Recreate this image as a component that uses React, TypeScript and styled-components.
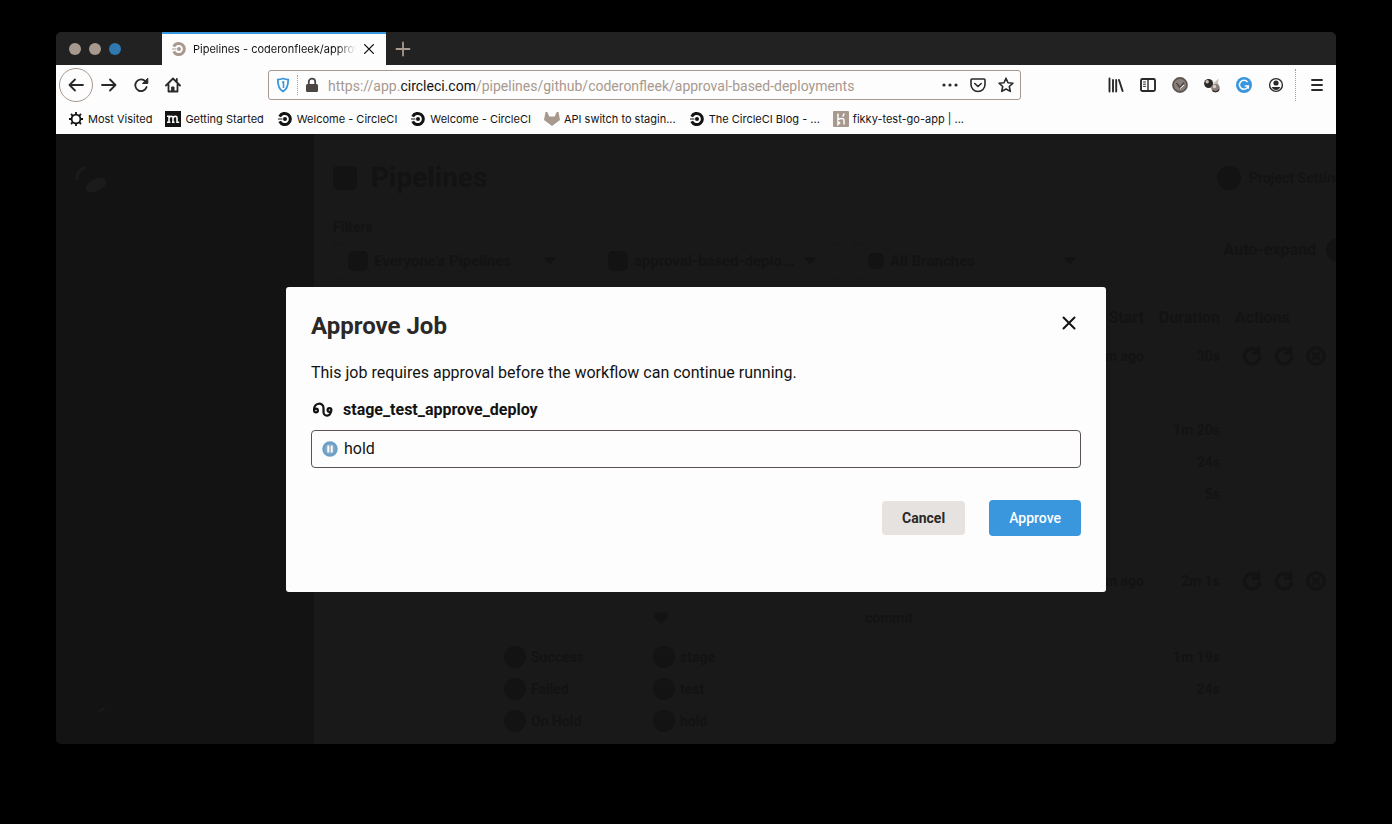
import React from 'react';
import styled, { createGlobalStyle } from 'styled-components';

const ink = '#2b2828';
const taupe = '#a8998f';
const blue = '#3a96dd';
const shade = '#131313';

const Global = createGlobalStyle`
  * { box-sizing: border-box; }
  body { margin: 0; background: #000; font-family: Roboto, "Liberation Sans", sans-serif; }
  button, select { font: inherit; color: inherit; background: none; border: 0; padding: 0; margin: 0; }
  svg { display: block; flex: none; }
`;

const Desktop = styled.div`
  min-height: 100vh;
  display: flex;
  flex-direction: column;
  padding: 32px 56px 80px;
`;

const Window = styled.div`
  flex: 1;
  display: flex;
  flex-direction: column;
  border-radius: 5px;
  overflow: hidden;
`;

const TabBar = styled.div`
  display: flex;
  height: 33px;
  background: #222222;
  color: ${taupe};
`;

const Lights = styled.div`
  display: flex;
  align-items: center;
  gap: 8px;
  width: 106px;
  padding-left: 13px;
`;

const Light = styled.span<{ $color: string }>`
  width: 12px;
  height: 12px;
  border-radius: 50%;
  background: ${(p) => p.$color};
`;

const Tab = styled.div`
  display: flex;
  align-items: center;
  gap: 6px;
  width: 224px;
  padding: 0 10px 2px 9px;
  background: #fdfdfd;
  border-top: 2px solid ${blue};
  color: ${shade};
  font: 11px/16px Inter, sans-serif;
`;

const TabTitle = styled.span`
  flex: 1;
  overflow: hidden;
  white-space: nowrap;
  mask-image: linear-gradient(to right, #000 88%, transparent);
`;

const PlainButton = styled.button`
  display: flex;
  align-items: center;
  justify-content: center;
`;

const NewTab = styled(PlainButton)`
  width: 34px;
`;

const Chrome = styled.div`
  background: #fdfdfd;
  color: ${ink};
  height: 69px;
`;

const Toolbar = styled.div`
  display: flex;
  align-items: center;
  height: 40px;
  padding: 0 3px;
`;

const ToolButton = styled(PlainButton)`
  width: 32px;
  height: 32px;
`;

const BackButton = styled(PlainButton)`
  width: 34px;
  height: 34px;
  border: 1px solid ${taupe};
  border-radius: 50%;
`;

const AddressBar = styled.div`
  flex: 1;
  min-width: 0;
  display: flex;
  align-items: center;
  height: 30px;
  margin: 0 79px;
  padding: 0 6px;
  border: 1px solid ${taupe};
  border-radius: 3px;
`;

const Divider = styled.span<{ $height: number }>`
  height: ${(p) => p.$height}px;
  margin: 0 6px;
  border-left: 1px dotted ${taupe};
`;

const BarEnd = styled(Divider)`
  margin: 0 5px 0 3px;
`;

const Address = styled.div`
  flex: 1;
  min-width: 0;
  overflow: hidden;
  white-space: nowrap;
  margin-left: 8px;
  padding-top: 2px;
  color: ${taupe};
  font: 14px/20px Roboto, sans-serif;
  b { font-weight: 400; color: ${shade}; }
`;

const AddressActions = styled.div`
  display: flex;
  gap: 12px;
`;

const Bookmarks = styled.nav`
  display: flex;
  align-items: center;
  gap: 13px;
  height: 28px;
  padding-left: 12px;
`;

const Bookmark = styled.a`
  display: flex;
  align-items: center;
  gap: 4px;
  color: ${shade};
  text-decoration: none;
  white-space: nowrap;
  font: 11px/16px Inter, sans-serif;
`;

const Viewport = styled.div`
  flex: 1;
  position: relative;
  display: flex;
  background: ${shade};
`;

const Sidebar = styled.aside`
  width: 258px;
  flex: none;
  display: flex;
  flex-direction: column;
  justify-content: space-between;
  padding: 26px 18px;
`;

const Main = styled.main`
  flex: 1;
  min-width: 0;
  overflow: hidden;
  padding: 24px 0 7px 19px;
  background: #191919;
  color: ${shade};
  font-size: 14px;
  line-height: 18px;
`;

const Wide = styled.div`
  width: calc(100% + 14px);
`;

const Spread = styled.div<{ $top?: boolean }>`
  display: flex;
  justify-content: space-between;
  align-items: ${(p) => (p.$top ? 'flex-start' : 'center')};
`;

const Cluster = styled.div<{ $gap: number }>`
  display: flex;
  align-items: center;
  gap: ${(p) => p.$gap}px;
  font-weight: 700;
`;

const Heading = styled.h1`
  margin: 0;
  font-size: 28px;
  line-height: 40px;
`;

const FilterLabel = styled.div`
  margin: 20px 0 7px;
  font-weight: 700;
`;

const Filters = styled.div`
  display: flex;
  gap: 10px;
`;

const Filter = styled.button`
  display: flex;
  align-items: center;
  gap: 6px;
  width: 250px;
  height: 36px;
  padding: 0 26px 0 14px;
  border: 1px solid #171717;
  border-radius: 4px;
  font-weight: 700;
  font-size: 15px;
`;

const FilterText = styled.span`
  flex: 1;
  text-align: left;
  white-space: nowrap;
`;

const AutoExpand = styled(Cluster)`
  height: 36px;
  padding-bottom: 22px;
  font-size: 16px;
`;

const Jobs = styled.table`
  width: 100%;
  margin-top: 23px;
  border-collapse: collapse;
  table-layout: fixed;
  th, td { padding: 0; text-align: left; font-weight: 700; white-space: nowrap; }
  th { font-size: 16px; }
  .end { text-align: right; }
  .pad { padding-left: 15px; }
`;

const Row = styled.tr<{ $h: number }>`
  height: ${(p) => p.$h}px;
`;

const Blob = styled.span<{ $size: number; $round?: boolean }>`
  flex: none;
  width: ${(p) => p.$size}px;
  height: ${(p) => p.$size}px;
  border-radius: ${(p) => (p.$round ? '50%' : '5px')};
  background: ${shade};
`;

const State = styled.div`
  display: flex;
  align-items: center;
  gap: 5px;
`;

const RowActions = styled.div`
  display: flex;
  gap: 10px;
  padding-left: 21px;
`;

const Overlay = styled.div`
  position: absolute;
  inset: 0;
  display: flex;
  align-items: center;
  justify-content: center;
`;

const Dialog = styled.section`
  width: 820px;
  max-width: 100%;
  padding: 24px 25px 56px;
  border-radius: 3px;
  background: #fdfdfd;
  color: ${shade};
  font-size: 16px;
  line-height: 24px;
`;

const DialogTitle = styled.h2`
  margin: 0;
  color: ${ink};
  font-size: 24px;
  line-height: 30px;
`;

const CloseButton = styled(PlainButton)`
  width: 24px;
  height: 24px;
`;

const Message = styled.p`
  margin: 20px 0 13px;
`;

const Workflow = styled.div`
  display: flex;
  align-items: center;
  gap: 8px;
  padding-bottom: 8px;
  font-weight: 700;
`;

const JobBox = styled.div`
  display: flex;
  align-items: center;
  gap: 6px;
  height: 38px;
  padding: 0 10px;
  border: 1px solid #5a5350;
  border-radius: 4px;
`;

const Buttons = styled.div`
  display: flex;
  justify-content: flex-end;
  align-items: center;
  gap: 24px;
  margin-top: 32px;
`;

const ActionButton = styled.button<{ $primary?: boolean }>`
  height: ${(p) => (p.$primary ? 36 : 34)}px;
  padding: 0 20px;
  border-radius: 4px;
  font-size: 14px;
  font-weight: ${(p) => (p.$primary ? 500 : 700)};
  color: ${(p) => (p.$primary ? '#fdfdfd' : ink)};
  background: ${(p) => (p.$primary ? blue : '#e6e2df')};
`;

const Stroke = ({ d, size = 16, w = 2, children }: { d?: string; size?: number; w?: number; children?: React.ReactNode }) => (
  <svg width={size} height={size} viewBox="0 0 16 16" fill="none" stroke="currentColor" strokeWidth={w} strokeLinecap="round" strokeLinejoin="round">
    {d && <path d={d} />}
    {children}
  </svg>
);

const CircleLogo = ({ color = shade }: { color?: string }) => (
  <svg width="16" height="16" viewBox="0 0 16 16">
    <path d="M2.700 5.600A5.600 5.600 0 1 1 2.700 10.400" fill="none" stroke={color} strokeWidth="3" />
    <path d="M1 8h4.500" stroke={color} strokeWidth="1" />
    <circle cx="8" cy="8" r="2" fill={color} />
  </svg>
);

const Gear = () => (
  <svg width="16" height="16" viewBox="0 0 16 16" fill="none" stroke="currentColor">
    <circle cx="8" cy="8" r="4.400" strokeWidth="1.800" />
    <path d="M8 1v2.400M8 12.600V15M1 8h2.400M12.600 8H15M3 3l1.800 1.800M11.200 11.200 13 13M3 13l1.800-1.800M11.200 4.800 13 3" strokeWidth="1.800" />
  </svg>
);

const Mozilla = () => (
  <svg width="16" height="16" viewBox="0 0 16 16">
    <path d="M0 0h16v16H0z" fill={shade} />
    <path d="M2 5.200h2v6M2 11.300h3.400M4 7c.6-2 4-2.400 4 0v4.300M7 11.300h2.600M8 7c.6-2 4-2.400 4 0v4.300h2.200" fill="none" stroke="#fdfdfd" strokeWidth="1.600" />
  </svg>
);

const Fox = () => (
  <svg width="16" height="16" viewBox="0 0 16 16">
    <path d="M1.500 1h1.800l2 4.500h5.400l2-4.500h1.800L16 9l-8 6-8-6z" fill={taupe} />
  </svg>
);

const Heroku = () => (
  <svg width="16" height="16" viewBox="0 0 16 16">
    <rect width="16" height="16" rx="1" fill={taupe} />
    <path d="M5 2.500v6c2-1 6-2 6 .6v4.400M11 2.500c0 1.400-.6 2-1.400 3M5 10.500v3l1.600-1.500z" fill="none" stroke="#fdfdfd" strokeWidth="1.500" />
  </svg>
);

const bookmarks: [React.ReactNode, string][] = [
  [<Gear />, 'Most Visited'],
  [<Mozilla />, 'Getting Started'],
  [<CircleLogo />, 'Welcome - CircleCI'],
  [<CircleLogo />, 'Welcome - CircleCI'],
  [<Fox />, 'API switch to stagin...'],
  [<CircleLogo />, 'The CircleCI Blog - ...'],
  [<Heroku />, 'fikky-test-go-app | ...'],
];

const Chevron = () => (
  <svg width="12" height="8" viewBox="0 0 12 8"><path d="M0 0h12L6 8z" fill={shade} /></svg>
);

const Heart = () => (
  <svg width="16" height="12" viewBox="0 0 16 12"><path d="M8 12 1 5c-2-5 5-6 7-3 2-3 9-2 7 3z" fill={shade} /></svg>
);

const PipelineActions = () => (
  <RowActions>
    <Stroke size={22} w={2.4} d="M12.500 5A5.500 5.500 0 1 0 13.500 9M13 2v4H9" />
    <Stroke size={22} w={2.4} d="M12.500 5A5.500 5.500 0 1 0 13.500 9M13 2v4H9" />
    <Stroke size={22} w={2.4}><circle cx="8" cy="8" r="6" /><path d="m6 6 4 4M10 6l-4 4" /></Stroke>
  </RowActions>
);

const PipelineRow = ({ start, duration }: { start: string; duration: string }) => (
  <Row $h={44}>
    <td colSpan={4} />
    <td className="end">{start}</td>
    <td className="end">{duration}</td>
    <td><PipelineActions /></td>
  </Row>
);

const JobRow = ({ status, job, time }: { status?: string; job?: string; time: string }) => (
  <Row $h={32}>
    <td />
    <td>{status && <State><Blob $size={22} $round />{status}</State>}</td>
    <td>{job && <State><Blob $size={22} $round />{job}</State>}</td>
    <td />
    <td />
    <td className="end">{time}</td>
    <td />
  </Row>
);

const PipelinesPage = () => (
  <Main>
    <Wide>
      <Spread>
        <Cluster $gap={14}><Blob $size={24} /><Heading>Pipelines</Heading></Cluster>
        <Cluster $gap={8}><Blob $size={24} $round />Project Settings</Cluster>
      </Spread>
      <FilterLabel>Filters</FilterLabel>
      <Spread>
        <Filters>
          <Filter><Blob $size={20} /><FilterText>Everyone's Pipelines</FilterText><Chevron /></Filter>
          <Filter><Blob $size={20} /><FilterText>approval-based-deplo...</FilterText><Chevron /></Filter>
          <Filter><Blob $size={16} /><FilterText>All Branches</FilterText><Chevron /></Filter>
        </Filters>
        <AutoExpand $gap={10}>Auto-expand<Blob $size={24} $round /></AutoExpand>
      </Spread>
      <Jobs>
        <colgroup>
          <col style={{ width: 171 }} /><col style={{ width: 149 }} /><col style={{ width: 212 }} />
          <col style={{ width: 212 }} /><col style={{ width: 67 }} /><col style={{ width: 76 }} /><col />
        </colgroup>
        <thead>
          <Row $h={32}>
            <td colSpan={4} />
            <th className="end">Start</th><th className="end">Duration</th><th className="pad">Actions</th>
          </Row>
        </thead>
        <tbody>
          <PipelineRow start="1m ago" duration="30s" />
          <Row $h={36}><td colSpan={7} /></Row>
          <JobRow time="1m 20s" />
          <JobRow time="24s" />
          <JobRow time="5s" />
          <Row $h={49}><td colSpan={7} /></Row>
          <PipelineRow start="9m ago" duration="2m 1s" />
          <Row $h={30}><td colSpan={2} /><td><Heart /></td><td>commit</td><td colSpan={3} /></Row>
          <Row $h={8}><td colSpan={7} /></Row>
          <JobRow status="Success" job="stage" time="1m 19s" />
          <JobRow status="Failed" job="test" time="24s" />
          <JobRow status="On Hold" job="hold" time="" />
        </tbody>
      </Jobs>
    </Wide>
  </Main>
);

const ApproveDialog = () => (
  <Overlay>
    <Dialog role="dialog" aria-labelledby="dialog-title">
      <Spread $top>
        <DialogTitle id="dialog-title">Approve Job</DialogTitle>
        <CloseButton aria-label="Close"><Stroke w={2} d="M2.500 2.500 13.500 13.500M13.500 2.500 2.500 13.500" /></CloseButton>
      </Spread>
      <Message>This job requires approval before the workflow can continue running.</Message>
      <Workflow>
        <svg width="24" height="24" viewBox="0 0 24 24" fill="none" stroke="currentColor" strokeWidth="2.200">
          <circle cx="5" cy="12.500" r="1.900" />
          <circle cx="18.500" cy="12" r="1.900" />
          <path d="M3 12C3 4 12.500 4 12.500 10v4c0 5 7 5 7.500-1" />
        </svg>
        stage_test_approve_deploy
      </Workflow>
      <JobBox>
        <svg width="16" height="16" viewBox="0 0 16 16">
          <circle cx="8" cy="8" r="6.500" fill="#85a9c4" stroke="#6c9fc8" strokeWidth="2.500" />
          <path d="M6.300 4.500v7M9.700 4.500v7" stroke="#fdfdfd" strokeWidth="2" />
        </svg>
        hold
      </JobBox>
      <Buttons>
        <ActionButton>Cancel</ActionButton>
        <ActionButton $primary>Approve</ActionButton>
      </Buttons>
    </Dialog>
  </Overlay>
);

export default function App() {
  return (
    <Desktop>
      <Global />
      <Window>
        <TabBar>
          <Lights><Light $color={taupe} /><Light $color={taupe} /><Light $color="#2f78b0" /></Lights>
          <Tab>
            <CircleLogo color={taupe} />
            <TabTitle>Pipelines - coderonfleek/approv</TabTitle>
            <PlainButton aria-label="Close tab"><Stroke size={14} w={1.6} d="M3 3l10 10M13 3 3 13" /></PlainButton>
          </Tab>
          <NewTab aria-label="New tab"><Stroke w={1.8} d="M8 1.500v13M1.500 8h13" /></NewTab>
        </TabBar>
        <Chrome>
          <Toolbar>
            <BackButton aria-label="Back"><Stroke w={1.800} d="M15 8H1.500M7 2.500 1.500 8 7 13.500" /></BackButton>
            <ToolButton aria-label="Forward"><Stroke w={1.800} d="M1 8h13.500M9 2.500 14.500 8 9 13.500" /></ToolButton>
            <ToolButton aria-label="Reload">
              <Stroke w={1.800} d="M12.500 4.500A5.800 5.800 0 1 0 13.600 10"><path d="M14.800 1.500v5h-5z" fill="currentColor" strokeWidth="1" /></Stroke>
            </ToolButton>
            <ToolButton aria-label="Home">
              <Stroke w={1.800} d="M1 8.500 8 1.500l7 7M3.500 7.500v7h9v-7M11.800 2v3"><path d="M7 10h2v4.500H7z" fill="currentColor" strokeWidth="1" /></Stroke>
            </ToolButton>
            <AddressBar>
              <svg width="16" height="16" viewBox="0 0 16 16" fill="none" stroke={blue}>
                <path d="M8 1.500c2 .8 3.500 1.100 5.200 1.200 0 6-1 9.300-5.200 11.800-4.200-2.500-5.200-5.800-5.200-11.800C4.500 2.600 6 2.300 8 1.500z" strokeWidth="1.800" />
                <path d="M7 5.200c.7 0 1.200-.2 1.500-.3v6" strokeWidth="1.600" />
              </svg>
              <Divider $height={20} />
              <svg width="16" height="16" viewBox="0 0 16 16">
                <path d="M4.800 8V4.800a3.200 3.200 0 0 1 6.400 0V8" fill="none" stroke="#4b4543" strokeWidth="1.800" />
                <rect x="2" y="7" width="12" height="8" rx="1.500" fill="#4b4543" />
              </svg>
              <Address role="textbox" aria-label="Address" tabIndex={0}>
                https://app.<b>circleci.com</b>/pipelines/github/coderonfleek/approval-based-deployments
              </Address>
              <AddressActions>
                <PlainButton aria-label="Page actions">
                  <svg width="16" height="16" viewBox="0 0 16 16" fill={ink}><circle cx="2" cy="8" r="1.600" /><circle cx="8" cy="8" r="1.600" /><circle cx="14" cy="8" r="1.600" /></svg>
                </PlainButton>
                <PlainButton aria-label="Save to Pocket"><Stroke w={1.600} d="M2 2h12a1 1 0 0 1 1 1v4.500a7 7 0 0 1-14 0V3a1 1 0 0 1 1-1zM4.800 6.500 8 9.500l3.200-3" /></PlainButton>
                <PlainButton aria-label="Bookmark this page"><Stroke w={1.600} d="m8 1.200 2 4.500 5 .5-3.700 3.300 1 4.900L8 12l-4.300 2.400 1-4.900L1 6.200l5-.5z" /></PlainButton>
              </AddressActions>
            </AddressBar>
            <ToolButton aria-label="Library"><Stroke w={1.900} d="M1.500 1.500v13M5 3v11.500M8.200 3v11.500M11 3l3.600 11" /></ToolButton>
            <ToolButton aria-label="Sidebars"><Stroke w={1.900}><rect x="1" y="2" width="14" height="12" rx="1.500" /><path d="M8 2v12" strokeWidth="1.400" /><path d="M3.500 5h2M3.500 7.200h2M3.500 9.400h2" strokeWidth="1" /></Stroke></ToolButton>
            <ToolButton aria-label="Verified extension">
              <svg width="16" height="16" viewBox="0 0 16 16"><circle cx="8" cy="8" r="7" fill="#8b7f79" stroke="#5f5753" strokeWidth="1.800" /><path d="m4.500 6 3.500 4.500 4-5" fill="none" stroke="#4b4543" strokeWidth="1.400" /><path d="m8 11.500 4-3.500" stroke="#fdfdfd" strokeWidth="1" /></svg>
            </ToolButton>
            <ToolButton aria-label="Molecule extension">
              <svg width="16" height="16" viewBox="0 0 16 16"><circle cx="4.600" cy="6.500" r="4.500" fill={ink} /><circle cx="3.200" cy="4.800" r="1.700" fill="#c9beb8" /><path d="M8 4.500 11 5l3.500-3.500-.5 5 1.500 3z" fill="#c9beb8" /><circle cx="11.500" cy="11" r="4.300" fill="#8b7f79" /><path d="M8.500 13.500c2 2 5.500 1.500 6.500-1" fill="none" stroke={ink} strokeWidth="1.200" /><circle cx="10.500" cy="9.500" r="1.700" fill="#d8cfca" /></svg>
            </ToolButton>
            <ToolButton aria-label="Grammar extension">
              <svg width="16" height="16" viewBox="0 0 16 16" fill="none"><circle cx="8" cy="8" r="8" fill={blue} /><path d="M11.500 5A4.500 4.500 0 1 0 12.300 9H8.800M12.300 9v2.800" stroke="#fdfdfd" strokeWidth="1.500" /></svg>
            </ToolButton>
            <ToolButton aria-label="Account">
              <svg width="16" height="16" viewBox="0 0 16 16"><circle cx="8" cy="8" r="6.400" fill="none" stroke={ink} strokeWidth="1.400" /><circle cx="8" cy="6" r="2.600" fill={ink} /><path d="M3.800 10h8.400c-.6 2-2.200 3-4.200 3s-3.600-1-4.200-3z" fill={ink} /></svg>
            </ToolButton>
            <BarEnd $height={32} />
            <ToolButton aria-label="Menu"><Stroke w={1.900} d="M3 3h10M3 8h10M3 13h10" /></ToolButton>
          </Toolbar>
          <Bookmarks>
            {bookmarks.map(([icon, label], i) => (
              <Bookmark href="#" key={i}>{icon}{label}</Bookmark>
            ))}
          </Bookmarks>
        </Chrome>
        <Viewport>
          <Sidebar>
            <svg width="36" height="36" viewBox="0 0 36 36" fill="none" stroke="#1b1b1b">
              <path d="M3 20C3 13 6 9 11 8" strokeWidth="3" />
              <ellipse cx="22" cy="25" rx="11" ry="6" fill="#1b1b1b" stroke="none" transform="rotate(-25 22 25)" />
            </svg>
            <svg width="36" height="18" viewBox="0 0 36 18"><path d="m22 12 10-6-3 5z" fill="#1b1b1b" /></svg>
          </Sidebar>
          <PipelinesPage />
          <ApproveDialog />
        </Viewport>
      </Window>
    </Desktop>
  );
}
